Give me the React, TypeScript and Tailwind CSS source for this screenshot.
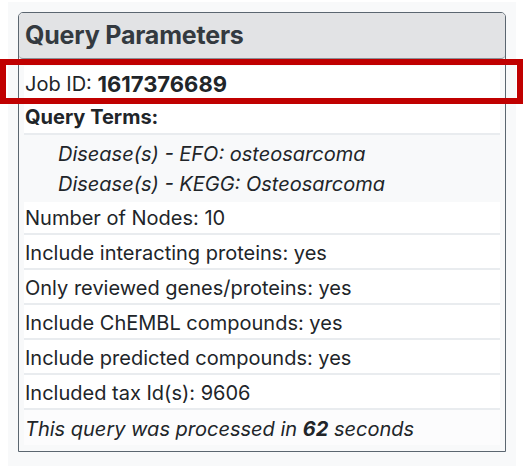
const rows = [
  'Include interacting proteins: yes',
  'Only reviewed genes/proteins: yes',
  'Include ChEMBL compounds: yes',
  'Include predicted compounds: yes',
  'Included tax Id(s): 9606',
];

export default function App() {
  return (
    <div
      className="relative w-[527px] h-[466px] bg-white text-[#212529]"
      style={{ fontFamily: 'Inter, "Liberation Sans", Arial, sans-serif' }}
    >
      <div className="ml-[8px] pt-[2px] w-[508px] h-[466px]">
        <div className="bg-[#f8f9fa] h-[464px] px-[10px] pt-[10px]">
          <div className="border border-[#5b6670] rounded-t-[5px] bg-[#f8f9fa]">
            <div className="h-[46px] bg-[#e2e3e5] rounded-[4px] border-b border-[#8a9198] flex items-center pl-[6px]">
              <h2 className="text-[25px] font-bold text-[#343a40] tracking-[-0.2px]">Query Parameters</h2>
            </div>
            <div className="px-[5px] pt-[7px] pb-[6px]">
              <div className="h-[34px] bg-white flex items-center pl-[1px] pt-[2px] text-[20px]">
                Job ID:&nbsp;<span className="font-bold text-[22px]">1617376689</span>
              </div>
              <div className="h-[35px] bg-white flex items-center pl-[1px] text-[20px] font-bold border-b-2 border-[#e9ecef]">
                Query Terms:
              </div>
              <div className="h-[67px] bg-[#f8f9fa] pl-[34px] pt-[4px] text-[20px] italic leading-[30px]">
                <div>Disease(s) - EFO: osteosarcoma</div>
                <div>Disease(s) - KEGG: Osteosarcoma</div>
              </div>
              <div className="h-[33px] bg-white flex items-center pl-[1px] text-[20px] border-b-2 border-[#e9ecef]">
                Number of Nodes: 10
              </div>
              {rows.map((r) => (
                <div
                  key={r}
                  className="h-[35px] bg-white flex items-center pl-[1px] pt-[2px] text-[20px] border-b-2 border-[#e9ecef]"
                >
                  {r}
                </div>
              ))}
              <div className="h-[35px] bg-[#fcfcfd] flex items-center pl-[1px] pt-[2px] text-[20px] italic">
                This query was processed in&nbsp;<span className="font-bold">62</span>&nbsp;seconds
              </div>
            </div>
          </div>
        </div>
      </div>
      <div className="absolute left-0 top-[59px] w-[523px] h-[45px] border-[6px] border-[#c00000]" />
    </div>
  );
}
